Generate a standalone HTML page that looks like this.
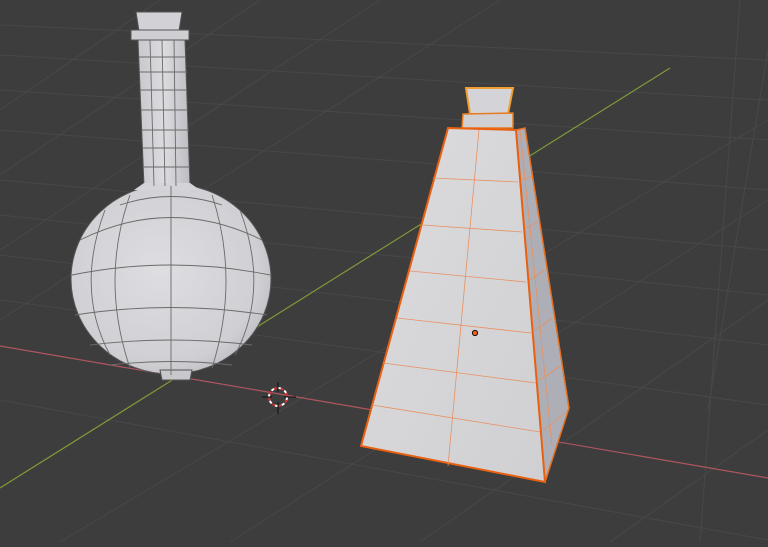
<!DOCTYPE html><html><head><style>html,body{margin:0;padding:0;background:#3d3d3d;overflow:hidden}</style></head><body>
<svg width="768" height="542" viewBox="0 0 768 542" xmlns="http://www.w3.org/2000/svg">
<defs>
<radialGradient id="sph" cx="0.45" cy="0.45" r="0.65"><stop offset="0" stop-color="#dedee2"/><stop offset="0.75" stop-color="#d0d0d4"/><stop offset="1" stop-color="#b4b4bc"/></radialGradient>
<linearGradient id="neck" x1="0" x2="1"><stop offset="0" stop-color="#c8c8cc"/><stop offset="0.5" stop-color="#dcdce0"/><stop offset="1" stop-color="#bcbcc2"/></linearGradient>
<linearGradient id="front" x1="0" y1="0" x2="1" y2="1"><stop offset="0" stop-color="#dcdcde"/><stop offset="1" stop-color="#d0d0d3"/></linearGradient>
</defs>
<rect width="768" height="542" fill="#3d3d3d"/>
<g stroke="#484848" stroke-width="1" fill="none">
<line x1="0" y1="180" x2="768" y2="250"/><line x1="0" y1="215" x2="768" y2="295"/><line x1="0" y1="255" x2="768" y2="345"/><line x1="0" y1="300" x2="768" y2="405"/><line x1="0" y1="400" x2="768" y2="540"/><line x1="0" y1="130" x2="768" y2="190"/><line x1="0" y1="90" x2="768" y2="140"/><line x1="0" y1="55" x2="768" y2="100"/><line x1="0" y1="25" x2="768" y2="60"/>
<line x1="0" y1="320" x2="500" y2="0"/><line x1="0" y1="250" x2="380" y2="0"/><line x1="0" y1="175" x2="260" y2="0"/><line x1="0" y1="110" x2="160" y2="0"/><line x1="60" y1="542" x2="768" y2="120"/><line x1="230" y1="542" x2="768" y2="200"/><line x1="420" y1="542" x2="768" y2="300"/><line x1="610" y1="542" x2="768" y2="430"/>
<line x1="700" y1="542" x2="740" y2="0"/><line x1="708" y1="410" x2="768" y2="50"/>
</g>
<line x1="0" y1="346" x2="768" y2="478" stroke="#b0565f" stroke-width="1.2"/>
<line x1="0" y1="488" x2="670" y2="68" stroke="#7f9a3a" stroke-width="1.2"/>
<!-- bottle 1 -->
<g stroke="#555" stroke-width="1">
<polygon points="136,12 182,12 179,31 139,31" fill="#d2d2d6"/>
<rect x="131" y="30" width="58" height="10" fill="#cfcfd3"/>
<polygon points="138,40 185,40 190,186 144,186" fill="url(#neck)"/>
<ellipse cx="171" cy="279" rx="100" ry="95" fill="url(#sph)"/>
<polygon points="144,183 190,183 200,190 134,190" fill="#d4d4d8" stroke="none"/>
<polygon points="160,370 192,370 190,380 162,380" fill="#c8c8cc"/>
</g>
<g stroke="#6a6a6a" stroke-width="0.9" fill="none">
<path d="M139,57H186M139,72H187M140,90H187M141,110H188M142,130H189M143,148H189M144,167H190M150,40L154,186M162,40L165,186M174,40L176,186"/>
<path d="M80,240Q171,195 262,240M72,275Q171,255 270,275M75,315Q171,300 267,315M90,345Q171,335 252,345M110,365Q171,358 232,365M120,205Q171,188 222,205"/>
<path d="M171,186V375M130,195Q100,280 130,368M105,210Q75,290 110,355M212,195Q240,280 212,368M240,210Q270,290 235,355"/>
</g>
<!-- bottle 2 -->
<polygon points="466,88 513,88 508,114 470,114" fill="#d4d4d8" stroke="#f0a030" stroke-width="2"/>
<polygon points="463,114 513,113 513,128 462,128" fill="#d0d0d4" stroke="#e87a20" stroke-width="1.5"/>
<polygon points="516,130 525,128 569,408 545,482" fill="#aeaeb6" stroke="#e87020" stroke-width="1.5"/>
<polygon points="448,128 516,130 545,482 361,446" fill="url(#front)" stroke="#e86010" stroke-width="2"/>
<g stroke="#e89060" stroke-width="0.8" fill="none">
<path d="M479,130L448,466M433,178L518,182M423,225L522,232M410,271L526,282M397,318L531,333M383,363L536,383M372,405L540,432M522,180L532,176M526,228L538,222M530,280L545,270M535,330L552,318M540,380L560,366M544,430L566,412M520,130L552,445"/>
</g>
<circle cx="475" cy="333" r="2.6" fill="#f06010" stroke="#111" stroke-width="1"/>
<!-- 3D cursor -->
<g>
<circle cx="278" cy="397" r="9" fill="none" stroke="#fff" stroke-width="2" stroke-dasharray="4 3"/>
<circle cx="278" cy="397" r="9" fill="none" stroke="#d03030" stroke-width="2" stroke-dasharray="3 4" stroke-dashoffset="4"/>
<path d="M278,382V392M278,402V414M262,397H272M284,397H296" stroke="#111" stroke-width="1"/>
</g>
</svg>
</body></html>
